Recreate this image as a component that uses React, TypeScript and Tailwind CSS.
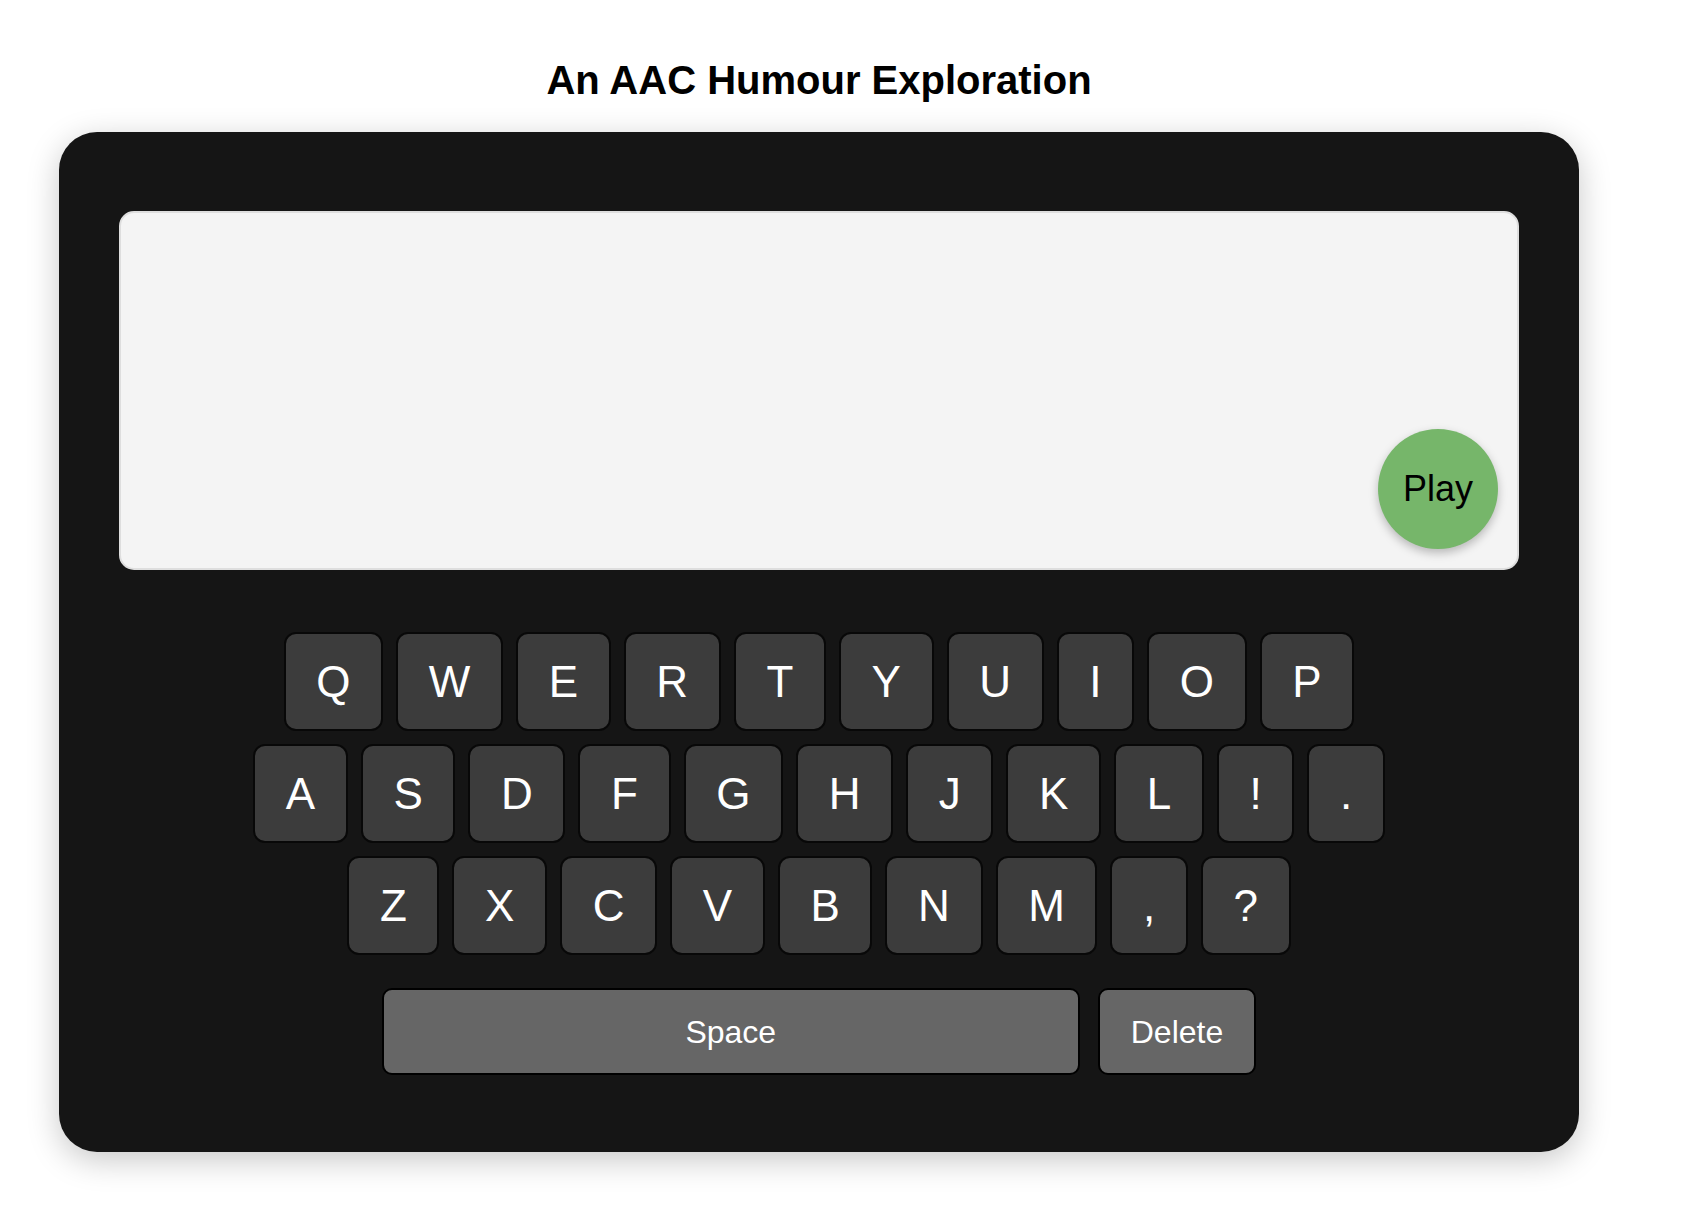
import React from "react";

const rows = [
  ["Q", "W", "E", "R", "T", "Y", "U", "I", "O", "P"],
  ["A", "S", "D", "F", "G", "H", "J", "K", "L", "!", "."],
  ["Z", "X", "C", "V", "B", "N", "M", ",", "?"],
];

const App = () => {
  return (
    <div className="min-h-screen bg-white font-['Liberation_Sans',Arial,sans-serif]">
      <div className="w-[1520px] ml-[59px] pt-[57px]">
        {/* Title */}
        <h1 className="text-center text-[40px] leading-[46px] font-bold text-black mb-[29px]">
          An AAC Humour Exploration
        </h1>

        {/* Device */}
        <div className="bg-[#151515] rounded-[38px] px-[60px] pt-[79px] pb-[77px] shadow-[0_8px_32px_rgba(0,0,0,0.22)]">
          {/* Message display */}
          <div className="relative h-[359px] bg-[#f4f4f4] border-2 border-[#dedede] rounded-[15px]">
            <button className="absolute right-[19px] bottom-[19px] w-[120px] h-[120px] rounded-full bg-[#76b66a] text-black text-[36px] flex items-center justify-center shadow-[0_4px_10px_rgba(0,0,0,0.25)]">
              Play
            </button>
          </div>

          {/* Keyboard */}
          <div className="mt-[62px] flex flex-col items-center gap-[13px]">
            {rows.map((row, i) => (
              <div key={i} className="flex justify-center gap-[13px]">
                {row.map((k) => (
                  <button
                    key={k}
                    className="h-[99px] px-[30.65px] flex items-center justify-center bg-[#3c3c3c] border-2 border-[#080808] rounded-[12px] text-white text-[44px] leading-none"
                  >
                    {k}
                  </button>
                ))}
              </div>
            ))}
          </div>

          <div className="mt-[33px] flex justify-center gap-[18px]">
            <button className="w-[698px] h-[87px] flex items-center justify-center bg-[#666666] border-2 border-black rounded-[10px] text-white text-[32px]">
              Space
            </button>
            <button className="h-[87px] px-[31px] flex items-center justify-center bg-[#666666] border-2 border-black rounded-[10px] text-white text-[32px]">
              Delete
            </button>
          </div>
        </div>
      </div>
    </div>
  );
};

export default App;
